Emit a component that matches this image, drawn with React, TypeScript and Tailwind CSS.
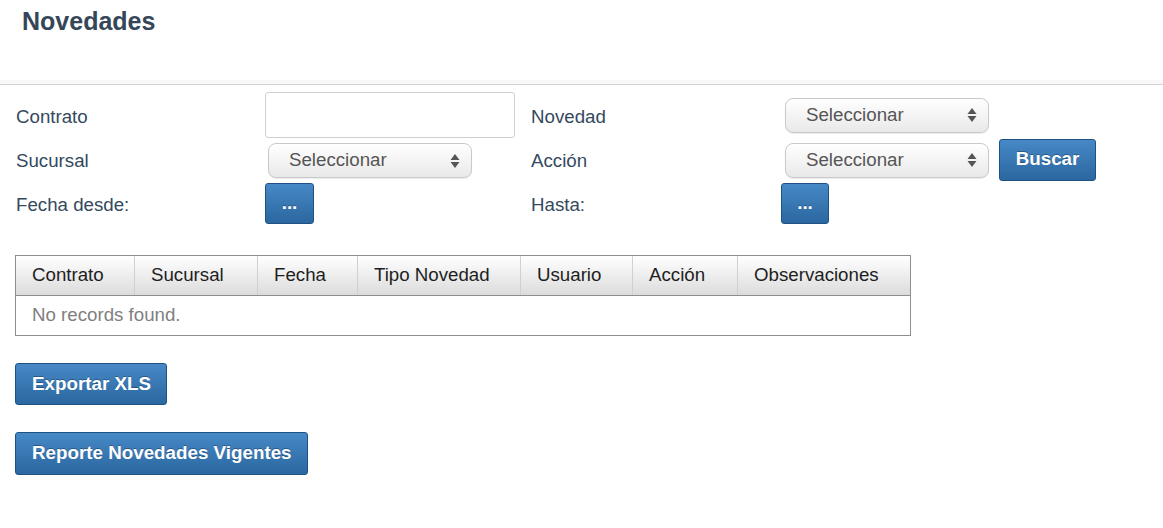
import React from "react";

const font = { fontFamily: '"Liberation Sans", Arial, sans-serif' };

function Arrows() {
  return (
    <svg width="10" height="16" viewBox="0 0 10 16" className="shrink-0">
      <polygon points="5,1 9.5,7 0.5,7" fill="#555" />
      <polygon points="5,15 9.5,9 0.5,9" fill="#555" />
    </svg>
  );
}

function Select({ className = "" }: { className?: string }) {
  return (
    <div
      className={
        "flex items-center justify-between h-[35px] w-[204px] rounded-[8px] border border-[#c9c9c9] bg-gradient-to-b from-[#ffffff] to-[#e9e9e9] pl-[20px] pr-[11px] text-[18.7px] text-[#555] shadow-[0_1px_1px_rgba(0,0,0,0.08)] " +
        className
      }
    >
      <span>Seleccionar</span>
      <Arrows />
    </div>
  );
}

function BlueButton({ children, className = "" }: { children: React.ReactNode; className?: string }) {
  return (
    <button
      className={
        "flex items-center rounded-[3px] border border-[#1f5282] bg-gradient-to-b from-[#4689c6] to-[#2b67a0] font-bold text-white text-[18.8px] [text-shadow:0_-1px_0_rgba(0,0,0,0.3)] " +
        className
      }
    >
      {children}
    </button>
  );
}

export default function App() {
  const cols = ["Contrato", "Sucursal", "Fecha", "Tipo Novedad", "Usuario", "Acción", "Observaciones"];
  return (
    <div className="w-[1163px] h-[528px] bg-white" style={font}>
      <div className="h-[80px] pl-[22px] pt-[6px]">
        <h1 className="text-[25px] leading-[30px] font-bold text-[#344658]">Novedades</h1>
      </div>
      <div className="h-[4px] bg-[#f8f8f8]" />
      <div className="h-[1px] bg-[#d2d2d2]" />

      <div className="pt-[7px] pl-[16px] grid grid-cols-[249px_266px_250px_218px_auto] grid-rows-[46px_44px_42px] items-center text-[18.7px] text-[#34495e]">
        <div className="pt-[5px]">Contrato</div>
        <div className="h-[46px] w-[250px] rounded-[3px] border border-[#cfcfcf] bg-white" />
        <div className="pt-[5px]">Novedad</div>
        <div className="pl-[4px]">
          <Select />
        </div>
        <div />

        <div className="pt-[2px]">Sucursal</div>
        <div className="pl-[3px] pt-[1px]">
          <Select />
        </div>
        <div className="pt-[2px]">Acción</div>
        <div className="pl-[4px]">
          <Select className="h-[34px]" />
        </div>
        <div className="-mt-[1px]">
          <BlueButton className="h-[42px] w-[97px] justify-center">Buscar</BlueButton>
        </div>

        <div className="pt-[5px]">Fecha desde:</div>
        <div>
          <BlueButton className="h-[41px] w-[49px] justify-center text-[14px]">...</BlueButton>
        </div>
        <div className="pt-[5px]">Hasta:</div>
        <div>
          <BlueButton className="h-[41px] w-[48px] justify-center text-[14px]">...</BlueButton>
        </div>
        <div />
      </div>

      <div className="ml-[15px] mt-[31px] w-[896px] border border-[#8e8e8e]">
        <div className="grid grid-cols-[118px_123px_100px_163px_112px_105px_auto] h-[40px] bg-gradient-to-b from-[#ffffff] to-[#dcdcdc] border-b border-[#8e8e8e] text-[18.7px] text-[#1e1e1e]">
          {cols.map((c, i) => (
            <div
              key={c}
              className={"flex items-center pl-[16px] " + (i > 0 ? "border-l border-[#d0d0d0]" : "")}
            >
              {c}
            </div>
          ))}
        </div>
        <div className="h-[39px] flex items-center pl-[16px] text-[18.7px] text-[#808080]">No records found.</div>
      </div>

      <div className="ml-[15px] mt-[27px]">
        <BlueButton className="h-[42px] w-[152px] pl-[16px]">Exportar XLS</BlueButton>
      </div>
      <div className="ml-[15px] mt-[27px]">
        <BlueButton className="h-[43px] w-[293px] pl-[16px]">Reporte Novedades Vigentes</BlueButton>
      </div>
    </div>
  );
}
